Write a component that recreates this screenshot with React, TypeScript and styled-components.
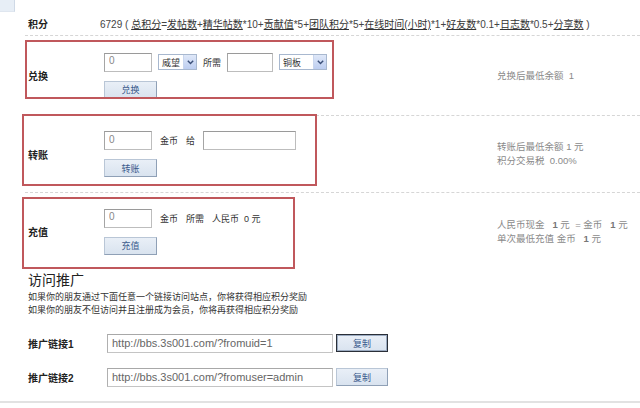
import React from 'react';
import styled, { createGlobalStyle } from 'styled-components';

const Global = createGlobalStyle`
  html, body { margin: 0; padding: 0; background: #fff; }
  body {
    font-family: "Liberation Sans", "Noto Sans CJK SC", sans-serif;
    font-size: 9px;
    color: #333;
  }
  #root { width: 640px; height: 408px; overflow: hidden; }
`;

const Page = styled.div`
  width: 640px;
  height: 408px;
  display: flex;
  flex-direction: column;
  background: #fff;
`;

const TabStub = styled.div`
  width: 15px;
  height: 12px;
  flex: none;
  background: #e7eef6;
  border-right: 1px solid #cfd9e6;
  border-bottom: 1px solid #dfe6ef;
  box-sizing: border-box;
`;

const Row = styled.div<{ $h: number; $dashed?: boolean; $labelW?: number }>`
  position: relative;
  flex: none;
  display: grid;
  grid-template-columns: ${p => p.$labelW ?? 76}px ${p => 469 - (p.$labelW ?? 76)}px 1fr;
  align-items: center;
  height: ${p => p.$h}px;
  margin-left: 25px;
  padding-left: 3px;
  box-sizing: border-box;
  border-bottom: ${p => (p.$dashed ? '1px dashed #d6d6d6' : 'none')};
`;

const Label = styled.div`
  font-size: 10px;
  font-weight: bold;
  color: #222;
  white-space: nowrap;
`;

const Formula = styled.div`
  grid-column: 2 / span 2;
  white-space: nowrap;
  color: #444;
  font-size: 10px;
`;

const U = styled.span`
  text-decoration: underline;
  color: #333;
`;

const Highlight = styled.div<{ $l: number; $t: number; $w: number; $hh: number }>`
  position: absolute;
  left: ${p => p.$l}px;
  top: ${p => p.$t}px;
  width: ${p => p.$w}px;
  height: ${p => p.$hh}px;
  border: 2px solid #c0585c;
  box-sizing: border-box;
  pointer-events: none;
`;

const Content = styled.div`
  display: flex;
  flex-direction: column;
  align-items: flex-start;
  gap: 9px;
`;

const Line = styled.div<{ $gap?: number }>`
  display: flex;
  align-items: center;
  gap: ${p => p.$gap ?? 6}px;
  white-space: nowrap;
`;

const Field = styled.input<{ $w: number }>`
  width: ${p => p.$w}px;
  height: 19px;
  box-sizing: border-box;
  margin: 0;
  padding: 0 4px 3px;
  border: 1px solid #bdbdbd;
  border-top-color: #9a9a9a;
  border-left-color: #a5a5a5;
  background: #fff;
  font-family: "Liberation Sans", sans-serif;
  font-size: 10px;
  color: #888;
  outline: none;
`;

const SelectBox = styled.div<{ $w: number }>`
  width: ${p => p.$w}px;
  height: 16px;
  box-sizing: border-box;
  display: flex;
  align-items: stretch;
  border: 1px solid #a8b8cf;
  background: #fff;
`;

const SelectText = styled.span`
  flex: 1;
  display: flex;
  align-items: center;
  padding-left: 3px;
  color: #333;
  font-size: 9px;
`;

const SelectBtn = styled.span`
  width: 12px;
  display: flex;
  align-items: center;
  justify-content: center;
  background: linear-gradient(#dfe8f8, #bccdf0);
  border-left: 1px solid #c9d6ee;
`;

const Text = styled.span`
  color: #333;
  font-size: 9px;
`;

const Btn = styled.div<{ $focus?: boolean; $w?: number }>`
  width: ${p => p.$w ?? 53}px;
  height: 18px;
  box-sizing: border-box;
  display: flex;
  align-items: center;
  justify-content: center;
  background: linear-gradient(#e9eff7, #d9e3ef);
  border: 1px solid ${p => (p.$focus ? '#2a2f38' : '#b9c6d6')};
  border-right-color: ${p => (p.$focus ? '#2a2f38' : '#8fa0b6')};
  border-bottom-color: ${p => (p.$focus ? '#2a2f38' : '#8fa0b6')};
  box-shadow: ${p => (p.$focus ? 'inset 0 0 0 1px #9aaac0' : 'none')};
  color: #3a5a8c;
  font-size: 9px;
`;

const Notes = styled.div`
  color: #8a8a8a;
  font-size: 9.5px;
  line-height: 14px;
  white-space: nowrap;
`;

const Num = styled.b`
  color: #777;
`;

const Promo = styled.div`
  flex: none;
  padding: 1px 0 0 28px;
`;

const Heading = styled.div`
  font-size: 14px;
  line-height: 18px;
  color: #222;
`;

const Para = styled.div`
  margin-top: 2px;
  line-height: 13px;
  color: #333;
  font-size: 9px;
`;

const LinkRow = styled.div`
  flex: none;
  height: 34px;
  display: grid;
  grid-template-columns: 76px 226px 52px;
  column-gap: 3px;
  align-items: center;
  padding-left: 28px;
`;

const UrlField = styled.input`
  width: 226px;
  height: 19px;
  box-sizing: border-box;
  margin: 0;
  padding: 0 4px;
  border: 1px solid #c4c4c4;
  border-top-color: #a8a8a8;
  border-left-color: #b0b0b0;
  font-family: "Liberation Sans", sans-serif;
  font-size: 11px;
  color: #666;
  background: #fff;
  outline: none;
`;

const Spacer = styled.div<{ $h: number }>`
  flex: none;
  height: ${p => p.$h}px;
`;

const BottomRule = styled.div`
  flex: none;
  height: 2px;
  background: #e2e2e2;
`;

const Chevron = () => (
  <svg width="7" height="5" viewBox="0 0 7 5">
    <path d="M0.8 0.8 L3.5 3.6 L6.2 0.8" fill="none" stroke="#3b4f78" strokeWidth="1.4" />
  </svg>
);

const Select = ({ w, text }: { w: number; text: string }) => (
  <SelectBox $w={w}>
    <SelectText>{text}</SelectText>
    <SelectBtn>
      <Chevron />
    </SelectBtn>
  </SelectBox>
);

export default function App() {
  return (
    <Page>
      <Global />
      <TabStub />
      <Row $h={24} $dashed $labelW={72}>
        <Label>积分</Label>
        <Formula>
          6729 ( <U>总积分</U>=<U>发帖数</U>+<U>精华帖数</U>*10+<U>贡献值</U>*5+<U>团队积分</U>*5+
          <U>在线时间(小时)</U>*1+<U>好友数</U>*0.1+<U>日志数</U>*0.5+<U>分享数</U> )
        </Formula>
      </Row>

      <Row $h={80} $dashed>
        <Label>兑换</Label>
        <Content>
          <Line>
            <Field $w={48} readOnly value="0" />
            <Select w={39} text="威望" />
            <Text>所需</Text>
            <Field $w={46} readOnly value="" />
            <Select w={48} text="铜板" />
          </Line>
          <Btn>兑换</Btn>
        </Content>
        <Notes>兑换后最低余额&nbsp;&nbsp;1</Notes>
        <Highlight $l={0} $t={4} $w={309} $hh={59} />
      </Row>

      <Row $h={77} $dashed>
        <Label>转账</Label>
        <Content>
          <Line $gap={8}>
            <Field $w={48} readOnly value="0" />
            <Text>金币</Text>
            <Text>给</Text>
            <Field $w={93} readOnly value="" />
          </Line>
          <Btn>转账</Btn>
        </Content>
        <Notes>
          转账后最低余额&nbsp;1 元
          <br />
          积分交易税&nbsp;&nbsp;0.00%
        </Notes>
        <Highlight $l={-3} $t={-2} $w={295} $hh={72} />
      </Row>

      <Row $h={77}>
        <Label>充值</Label>
        <Content>
          <Line $gap={8}>
            <Field $w={48} readOnly value="0" />
            <Text>金币</Text>
            <Text>所需</Text>
            <Text>人民币&nbsp;&nbsp;0 元</Text>
          </Line>
          <Btn>充值</Btn>
        </Content>
        <Notes>
          人民币现金&nbsp;&nbsp;&nbsp;<Num>1</Num> 元&nbsp;&nbsp;= 金币&nbsp;&nbsp;&nbsp;<Num>1</Num> 元
          <br />
          单次最低充值 金币&nbsp;&nbsp;&nbsp;<Num>1</Num> 元
        </Notes>
        <Highlight $l={-3} $t={4} $w={273} $hh={72} />
      </Row>

      <Promo>
        <Heading>访问推广</Heading>
        <Para>
          如果你的朋友通过下面任意一个链接访问站点，你将获得相应积分奖励
          <br />
          如果你的朋友不但访问并且注册成为会员，你将再获得相应积分奖励
        </Para>
      </Promo>

      <Spacer $h={9} />
      <LinkRow>
        <Label>推广链接1</Label>
        <UrlField readOnly value="http://bbs.3s001.com/?fromuid=1" />
        <Btn $focus $w={52}>复制</Btn>
      </LinkRow>
      <LinkRow>
        <Label>推广链接2</Label>
        <UrlField readOnly value="http://bbs.3s001.com/?fromuser=admin" />
        <Btn $w={52}>复制</Btn>
      </LinkRow>
      <Spacer $h={7} />
      <BottomRule />
    </Page>
  );
}
